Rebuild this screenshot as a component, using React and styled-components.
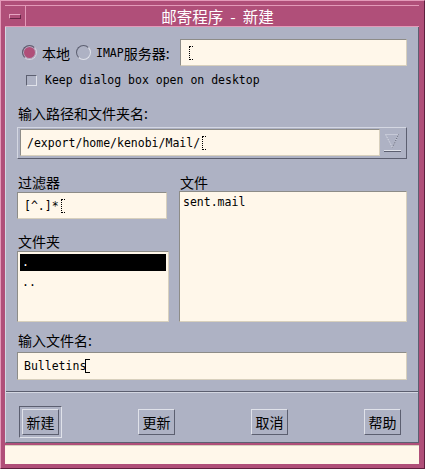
import React from "react";
import styled, { createGlobalStyle } from "styled-components";

const GlobalStyle = createGlobalStyle`
  html, body { margin: 0; padding: 0; background: #fff; }
  body { font-family: "Noto Sans CJK SC", "DejaVu Sans", sans-serif; }
`;

const cjk = `"Noto Sans CJK SC", "DejaVu Sans", sans-serif`;
const mono = `"DejaVu Sans Mono", "Noto Sans CJK SC", monospace`;

const Window = styled.div`
  width: 425px;
  height: 469px;
  box-sizing: border-box;
  background: #b04f79;
  border-top: 1px solid #e39ab9;
  border-left: 1px solid #e39ab9;
  border-right: 1px solid #5e1f3e;
  border-bottom: 1px solid #5e1f3e;
  padding: 4px 5px 4px 4px;
  display: flex;
  flex-direction: column;
`;

const TitleBar = styled.div`
  height: 20px;
  display: flex;
  border-top: 1px solid #e39ab9;
  border-bottom: 1px solid #e39ab9;
`;

const MenuButton = styled.div`
  width: 20px;
  border-right: 1px solid #e39ab9;
  display: flex;
  align-items: center;
  justify-content: center;
  &::after {
    content: "";
    width: 10px;
    height: 3px;
    background: #b04f79;
    border-top: 1px solid #e7a4c1;
    border-left: 1px solid #e7a4c1;
    border-right: 1px solid #6a2446;
    border-bottom: 1px solid #6a2446;
  }
`;

const Title = styled.div`
  flex: 1;
  color: #fff;
  font-family: ${cjk};
  font-size: 15.5px;
  line-height: 20px;
  text-align: center;
  padding-right: 10px;
  white-space: pre;
`;

const Body = styled.div`
  background: #aeb2c4;
  height: 418px;
  box-sizing: border-box;
  border-left: 1px solid #d4d7e2;
  border-right: 1px solid #5c5f70;
  border-bottom: 1px solid #5c5f70;
  display: flex;
  flex-direction: column;
`;

const Content = styled.div`
  padding: 12px 11px 0 11px;
  display: flex;
  flex-direction: column;
`;

const RadioRow = styled.div`
  display: flex;
  align-items: center;
  height: 27px;
  padding-left: 5px;
`;

const Radio = styled.span`
  width: 15px;
  height: 15px;
  border-radius: 50%;
  box-sizing: border-box;
  border: 1px solid ${p => (p.$on ? "#d4d7e2" : "#e0e2ea")};
  border-top-color: #5c5f70;
  border-left-color: #5c5f70;
  background: ${p => (p.$on ? "#b04f79" : "#aeb2c4")};
  box-shadow: inset 0 0 0 ${p => (p.$on ? 1 : 0)}px #aeb2c4;
  margin-right: ${p => p.$mr}px;
`;

const Label = styled.span`
  font-family: ${cjk};
  font-size: 14px;
  color: #000;
  margin-right: ${p => p.$mr || 0}px;
  white-space: nowrap;
`;

const MonoLabel = styled.span`
  font-family: ${mono};
  font-size: 11.5px;
  color: #000;
`;

const Field = styled.div`
  box-sizing: border-box;
  height: ${p => p.$h || 27}px;
  width: ${p => (p.$w ? p.$w + "px" : "auto")};
  flex: ${p => (p.$grow ? 1 : "none")};
  background: #fff7ea;
  border-top: 1px solid #8d8c88;
  border-left: 1px solid #8d8c88;
  border-right: 1px solid #d8d0bd;
  border-bottom: 1px solid #d8d0bd;
  display: flex;
  align-items: center;
  padding-left: 6px;
  font-family: ${mono};
  font-size: 11.5px;
  color: #000;
`;

const Caret = styled.span`
  display: inline-block;
  width: 4px;
  height: 14px;
  margin-left: 1px;
  box-sizing: border-box;
  border-left: 1px dotted #000;
  border-top: 1px dotted #000;
  border-bottom: 1px dotted #000;
  position: relative;
  left: 1px;
  ${p =>
    p.$solid &&
    `
    border-left: 1px solid #000;
    border-top: 1px solid #000;
    border-bottom: 1px solid #000;
    width: 5px;
    margin-left: -2px;
  `}
`;

const CheckRow = styled.div`
  display: flex;
  align-items: center;
  height: 14px;
  margin-top: 7px;
  padding-left: 9px;
`;

const Check = styled.span`
  width: 11px;
  height: 11px;
  box-sizing: border-box;
  border-top: 1px solid #5c5f70;
  border-left: 1px solid #5c5f70;
  border-right: 1px solid #e0e2ea;
  border-bottom: 1px solid #e0e2ea;
  margin-right: 8px;
`;

const Caption = styled.div`
  font-family: ${cjk};
  font-size: 14px;
  line-height: 18px;
  color: #000;
  margin-top: ${p => p.$mt || 0}px;
  margin-bottom: ${p => p.$mb || 0}px;
  padding-left: 1px;
`;

const Combo = styled.div`
  display: flex;
  height: 32px;
  box-sizing: border-box;
  border-top: 1px solid #d4d7e2;
  border-left: 1px solid #d4d7e2;
  border-right: 1px solid #5c5f70;
  border-bottom: 1px solid #5c5f70;
  padding: 1px 2px 2px 2px;
  margin-top: 5px;
`;

const Arrow = styled.div`
  width: 22px;
  margin-left: 2px;
  display: flex;
  align-items: center;
  justify-content: center;
`;

const Columns = styled.div`
  display: flex;
  gap: 10px;
  margin-top: 14px;
`;

const Column = styled.div`
  display: flex;
  flex-direction: column;
  width: ${p => p.$w}px;
`;

const List = styled.div`
  box-sizing: border-box;
  height: ${p => p.$h}px;
  background: #fff7ea;
  border-top: 1px solid #8d8c88;
  border-left: 1px solid #8d8c88;
  border-right: 1px solid #d8d0bd;
  border-bottom: 1px solid #d8d0bd;
  padding: 2px;
  font-family: ${mono};
  font-size: 11.5px;
  color: #000;
`;

const ListItem = styled.div`
  height: 17px;
  line-height: 17px;
  padding-left: ${p => p.$pl || 2}px;
  background: ${p => (p.$sel ? "#000" : "transparent")};
  color: ${p => (p.$sel ? "#fff" : "#000")};
  margin-bottom: ${p => p.$mb || 0}px;
`;

const Separator = styled.div`
  height: 2px;
  border-top: 1px solid #5c5f70;
  border-bottom: 1px solid #d4d7e2;
  box-sizing: border-box;
  margin-top: 11px;
`;

const ButtonRow = styled.div`
  display: flex;
  justify-content: space-between;
  align-items: center;
  padding: 13px 17px 0 13px;
`;

const DefaultFrame = styled.div`
  padding: 2px;
  border-top: 1px solid #5c5f70;
  border-left: 1px solid #5c5f70;
  border-right: 1px solid #e0e2ea;
  border-bottom: 1px solid #e0e2ea;
`;

const Button = styled.div`
  box-sizing: border-box;
  width: 37px;
  height: 26px;
  border-top: 1px solid #e0e2ea;
  border-left: 1px solid #e0e2ea;
  border-right: 1px solid #5c5f70;
  border-bottom: 1px solid #5c5f70;
  display: flex;
  align-items: center;
  justify-content: center;
  font-family: ${cjk};
  font-size: 14px;
  color: #000;
`;

const Footer = styled.div`
  margin-top: 2px;
  height: 18px;
  background: #fff7ea;
  border-top: 1px solid #d8d0bd;
`;

export default function App() {
  return (
    <>
      <GlobalStyle />
      <Window>
        <TitleBar>
          <MenuButton />
          <Title>邮寄程序  -  新建</Title>
        </TitleBar>
        <Body>
          <Content>
            <RadioRow>
              <Radio $on $mr={5} />
              <Label $mr={6}>本地</Label>
              <Radio $mr={5} />
              <MonoLabel>IMAP</MonoLabel>
              <Label $mr={10}>服务器:</Label>
              <Field $grow>
                <Caret />
              </Field>
            </RadioRow>
            <CheckRow>
              <Check />
              <MonoLabel>Keep dialog box open on desktop</MonoLabel>
            </CheckRow>
            <Caption $mt={17}>输入路径和文件夹名:</Caption>
            <Combo>
              <Field $grow $h={27}>
                /export/home/kenobi/Mail/
                <Caret />
              </Field>
              <Arrow>
                <svg width="18" height="22" viewBox="0 0 18 22">
                  <path d="M1.5 2.5 H14.5 L8.5 15.5 Z" fill="none" stroke="#dfe1ea" strokeDasharray="1 1" />
                  <path d="M14.5 2.5 L8.5 15.5" fill="none" stroke="#5c5f70" strokeDasharray="1 1" />
                  <rect x="0" y="18" width="17" height="1" fill="#e0e2ea" />
                  <rect x="0" y="19" width="17" height="1" fill="#5c5f70" />
                </svg>
              </Arrow>
            </Combo>
            <Columns>
              <Column $w={152}>
                <Caption $mb={1}>过滤器</Caption>
                <Field $h={27} $w={150}>
                  [^.]*
                  <Caret />
                </Field>
                <Caption $mt={13} $mb={1}>文件夹</Caption>
                <List $h={71}>
                  <ListItem $sel $mb={3}>.</ListItem>
                  <ListItem>..</ListItem>
                </List>
              </Column>
              <Column $w={228}>
                <Caption>文件</Caption>
                <List $h={131}>
                  <ListItem $pl={1}>sent.mail</ListItem>
                </List>
              </Column>
            </Columns>
            <Caption $mt={9} $mb={3}>输入文件名:</Caption>
            <Field $h={28}>
              Bulletins
              <Caret $solid />
            </Field>
          </Content>
          <Separator />
          <ButtonRow>
            <DefaultFrame>
              <Button>新建</Button>
            </DefaultFrame>
            <Button>更新</Button>
            <Button>取消</Button>
            <Button>帮助</Button>
          </ButtonRow>
        </Body>
        <Footer />
      </Window>
    </>
  );
}
